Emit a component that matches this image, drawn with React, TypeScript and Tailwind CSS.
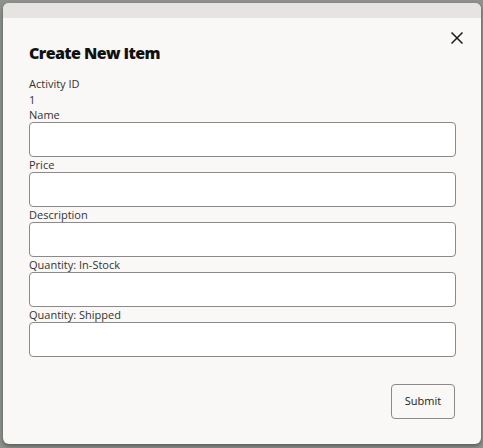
import React from "react";

const fields = ["Name", "Price", "Description", "Quantity: In-Stock", "Quantity: Shipped"];

export default function App() {
  return (
    <div className="w-[483px] h-[448px] bg-[#8e928c] pt-[3px] pl-[3px] overflow-hidden" style={{ fontFamily: '"Open Sans", "Noto Sans", sans-serif' }}>
      <div className="relative w-[478px] h-[441px] bg-[#f9f8f6] rounded-[6px] overflow-hidden shadow-[0_2px_4px_rgba(0,0,0,0.4)]">
        <div className="h-[15px] bg-[#e6e4e2]" />
        <button className="absolute left-[445px] top-[26px] w-[18px] h-[18px] flex items-center justify-center text-[#1a1a1a]">
          <svg width="12" height="12" viewBox="0 0 12 12" fill="none" stroke="currentColor" strokeWidth="1.5">
            <path d="M0.5 0.5L11.5 11.5M11.5 0.5L0.5 11.5" />
          </svg>
        </button>
        <div className="px-[26px] pt-[24px] pb-[25px] flex flex-col">
          <h2 className="text-[16px] leading-[22px] font-extrabold text-[#111] tracking-[-0.6px]">Create New Item</h2>
          <div className="mt-[12px] text-[11px] leading-[16px] text-[#333]">Activity ID</div>
          <div className="text-[11px] leading-[15px] text-[#333]">1</div>
          {fields.map((f) => (
            <div key={f} className="flex flex-col">
              <label className="h-[15px] leading-[15px] text-[11px] text-[#333] whitespace-nowrap">{f}</label>
              <input className="h-[35px] w-[427px] bg-white border border-[#8a8a8a] rounded-[4px] outline-none" />
            </div>
          ))}
          <div className="mt-[27px] flex justify-end">
            <button className="w-[64px] h-[35px] border border-[#8a8a8a] rounded-[4px] bg-[#f9f8f6] text-[11px] text-[#222]">Submit</button>
          </div>
        </div>
      </div>
    </div>
  );
}
